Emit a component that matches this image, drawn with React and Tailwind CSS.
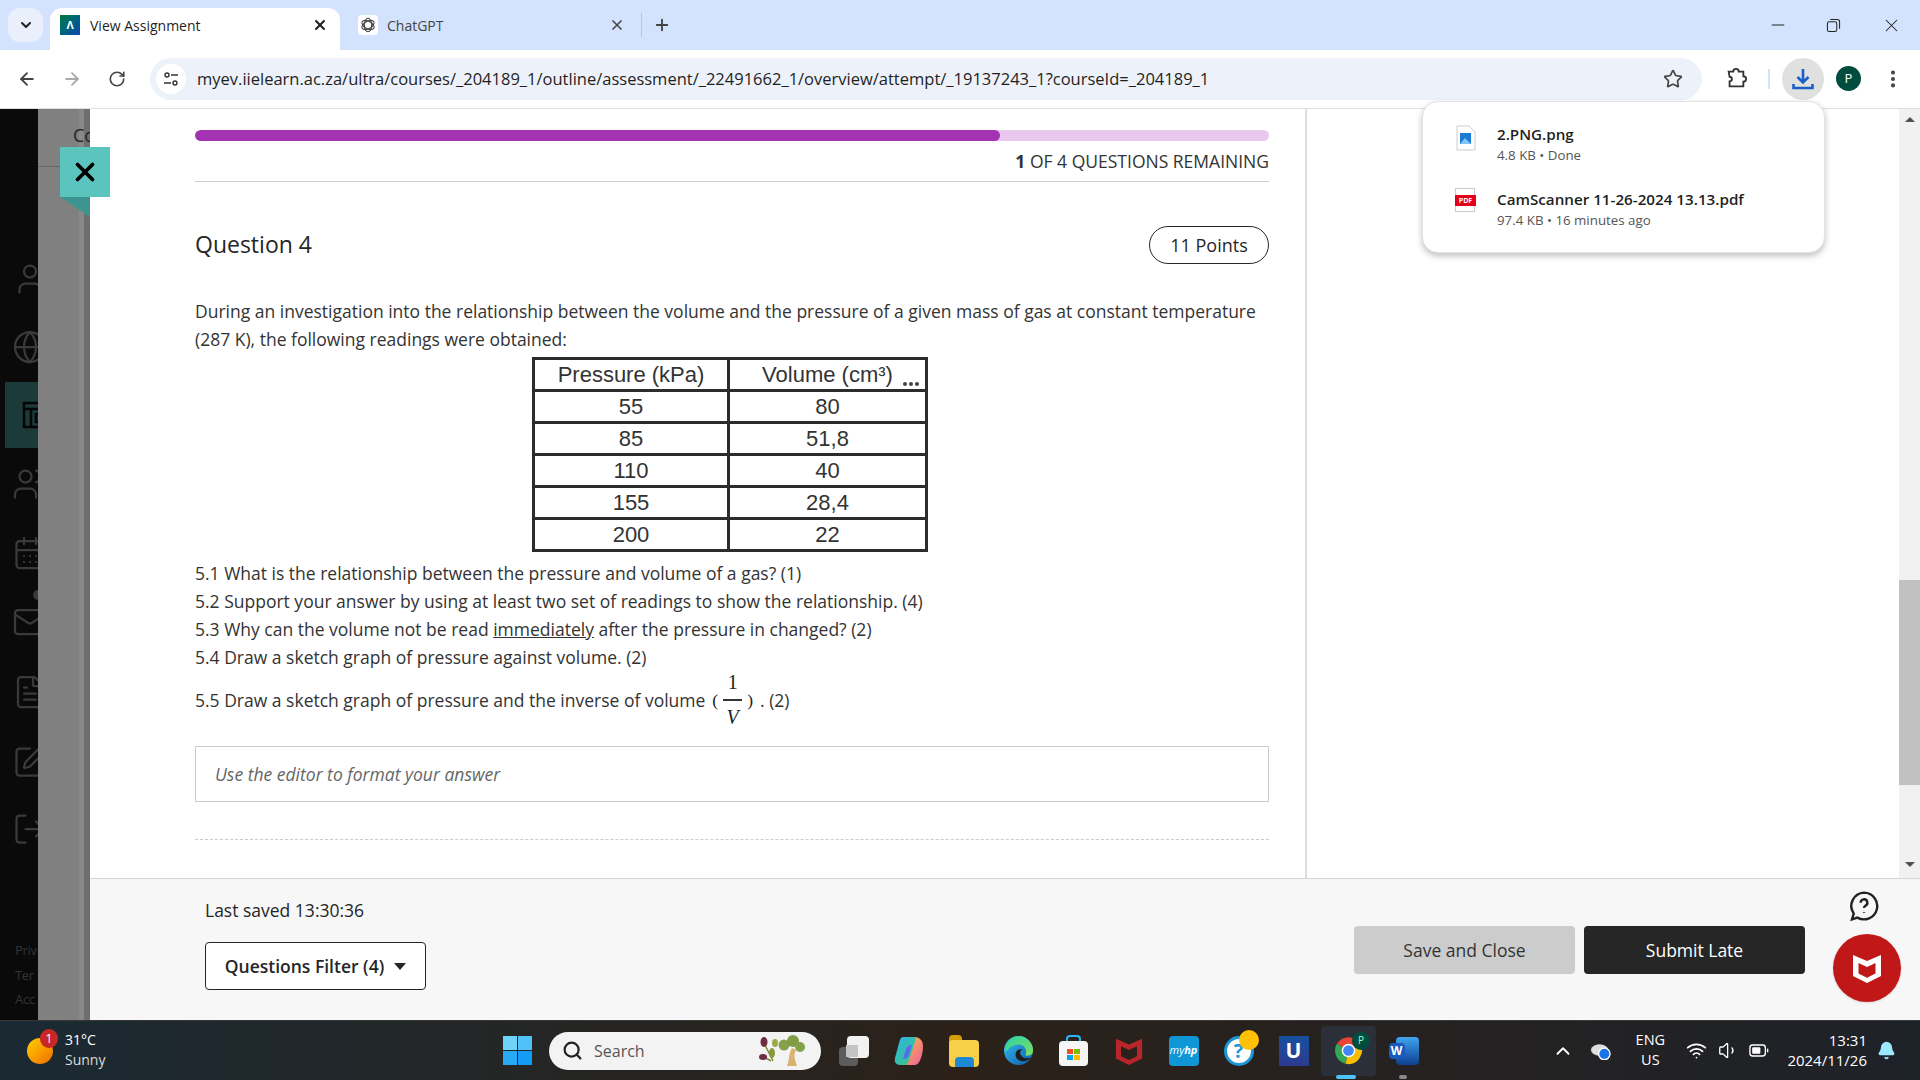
import {
  ArrowLeft, ArrowRight, RotateCw, Star, X, Plus, ChevronDown, ChevronUp, Minus, Search,
  User, Globe, Users, CalendarDays, Mail, FileText, SquarePen, LogOut, EllipsisVertical, Wifi, Volume1, Bell,
} from 'lucide-react';

const sidebarIcons = [
  { Icon: User, row: 'h-[67px] mt-[136px]' },
  { Icon: Globe, row: 'h-[69px]' },
  { Icon: null, row: 'h-[66px] my-[1px]' },
  { Icon: Users, row: 'h-[70px]' },
  { Icon: CalendarDays, row: 'h-[68px]' },
  { Icon: Mail, row: 'h-[70px]' },
  { Icon: FileText, row: 'h-[70px]' },
  { Icon: SquarePen, row: 'h-[70px]' },
  { Icon: LogOut, row: 'h-[64px]' },
];

const tableRows = [
  ['55', '80'],
  ['85', '51,8'],
  ['110', '40'],
  ['155', '28,4'],
  ['200', '22'],
];

const McAfeeShield = ({ className, fill = '#fff' }) => (
  <svg viewBox="0 0 32 32" className={className}>
    <path fill={fill} d="M2 3l14 6 14-6v21l-14 7-14-7zM7.500 11v10.500l8.500 4.200 8.500-4.200V11L16 15z" fillRule="evenodd" />
  </svg>
);

const ChatGptFavicon = () => (
  <span className="w-5 h-5 rounded bg-white flex items-center justify-center">
    <svg viewBox="0 0 24 24" className="w-4 h-4" fill="none" stroke="#444" strokeWidth="1.600">
      <ellipse cx="12" cy="12" rx="5.500" ry="10" />
      <ellipse cx="12" cy="12" rx="5.500" ry="10" transform="rotate(60 12 12)" />
      <ellipse cx="12" cy="12" rx="5.500" ry="10" transform="rotate(120 12 12)" />
    </svg>
  </span>
);

const TabBar = () => (
  <div className="h-[50px] bg-[#d3e3fd] flex items-end relative shrink-0 text-[14px] text-[#1f1f1f]">
    <div className="absolute left-2 top-2 w-[35px] h-[34px] rounded-xl bg-[#e9effb] flex items-center justify-center">
      <ChevronDown size={16} strokeWidth={3} />
    </div>
    <div className="ml-[50px] w-[290px] h-[42px] bg-white rounded-t-xl flex items-center pl-[10px] pr-[12px] pb-[8px]">
      <span className="w-5 h-5 bg-gradient-to-br from-[#0a7a3a] to-[#1a3fb0] text-white text-[11px] font-bold flex items-center justify-center">Λ</span>
      <span className="ml-[10px] flex-1">View Assignment</span>
      <X size={16} strokeWidth={3} />
    </div>
    <div className="w-[301px] h-[42px] flex items-center pl-[18px] pr-[16px] pb-[8px] text-[#444]">
      <ChatGptFavicon />
      <span className="ml-[9px] flex-1">ChatGPT</span>
      <X size={16} strokeWidth={2.500} />
    </div>
    <div className="h-[42px] flex items-center pb-[8px] text-[#444]">
      <span className="w-[1px] h-[24px] bg-[#a8c7fa]" />
      <Plus size={18} strokeWidth={2.500} className="ml-[11px]" />
    </div>
    <div className="ml-auto h-[50px] flex items-center text-[#222]">
      <Minus size={20} strokeWidth={1.200} className="mr-[38px]" />
      <svg viewBox="0 0 16 16" className="w-[15px] h-[15px] mr-[40px]" fill="none" stroke="#222" strokeWidth="1.100">
        <rect x="1.500" y="4" width="10" height="10.500" rx="2" />
        <path d="M4.500 1.500h7.500a2.500 2.500 0 0 1 2.500 2.500v7.500" />
      </svg>
      <X size={21} strokeWidth={1.200} className="mr-[18px]" />
    </div>
  </div>
);

const Toolbar = () => (
  <div className="h-[59px] bg-white border-b border-[#dfdfdf] rounded-t-xl flex items-center shrink-0 pb-[1px] text-[#444]">
    <ArrowLeft size={20} strokeWidth={2.200} className="ml-[17px]" />
    <ArrowRight size={20} strokeWidth={2.200} className="ml-[25px] text-[#aaa]" />
    <RotateCw size={18} strokeWidth={2.200} className="ml-[26px]" />
    <div className="ml-[24px] w-[1552px] h-[42px] rounded-full bg-[#edf2fa] flex items-center pl-[6px]">
      <span className="w-[30px] h-[30px] rounded-full bg-white flex items-center justify-center">
        <svg viewBox="0 0 16 16" className="w-4 h-4" fill="none" stroke="#333" strokeWidth="1.400">
          <circle cx="4" cy="4" r="2" />
          <path d="M8 4h7M1 12h7" />
          <circle cx="12" cy="12" r="2" />
        </svg>
      </span>
      <span className="ml-[11px] pt-[1px] text-[16.500px] text-[#1f1f1f] whitespace-nowrap">myev.iielearn.ac.za/ultra/courses/_204189_1/outline/assessment/_22491662_1/overview/attempt/_19137243_1?courseId=_204189_1</span>
      <Star size={20} strokeWidth={2} className="ml-auto mr-[19px]" />
    </div>
    <svg viewBox="0 0 24 24" className="ml-[23px] w-[22px] h-[22px]" fill="none" stroke="#333" strokeWidth="2">
      <path d="M4 4h5a3 3 0 0 1 6 0h5v5a3 3 0 0 1 0 6v5H5v-5.500a2.500 2.500 0 0 0 0-5z" />
    </svg>
    <span className="ml-[21px] w-[2px] h-[20px] bg-[#d3e3fd]" />
    <span className="ml-[12px] w-[42px] h-[42px] rounded-full bg-[#e0e0e0] flex items-center justify-center">
      <svg viewBox="0 0 24 24" className="w-[24px] h-[24px]" fill="none" stroke="#1a5fc8" strokeWidth="2.600">
        <path d="M12 2v13M6.500 10l5.500 5.500 5.500-5.500M2.500 17v4h19v-4" />
      </svg>
    </span>
    <span className="ml-[12px] w-[25px] h-[25px] rounded-full bg-[#004d40] text-white text-[13px] flex items-center justify-center">P</span>
    <EllipsisVertical size={22} strokeWidth={2.500} className="ml-[21px]" />
  </div>
);

const DownloadsPopup = () => (
  <div className="absolute left-[1422px] top-[101px] w-[403px] h-[152px] bg-white rounded-2xl border border-[#e3e3e3] shadow-[0_3px_6px_rgba(0,0,0,0.25)] pt-[21px] pl-[33px] text-[#1f1f1f]">
    <div className="flex h-[52px]">
      <svg viewBox="0 0 20 26" className="w-[20px] h-[26px] mt-[2px]">
        <path d="M1 1h12l6 6v18H1z" fill="#fff" stroke="#ccc" />
        <rect x="4" y="8" width="11" height="11" fill="#1e7ad6" />
        <path d="M4 19l5-6 6 6z" fill="#7cc7f5" />
      </svg>
      <div className="ml-[21px]">
        <div className="text-[15.200px] leading-[22px] font-semibold">2.PNG.png</div>
        <div className="text-[13.300px] leading-[20px] text-[#555]">4.8 KB • Done</div>
      </div>
    </div>
    <div className="flex h-[52px] mt-[13px]">
      <div className="w-[20px] h-[24px] relative border border-[#ccc] -ml-[1px]">
        <span className="absolute -left-[1px] top-[6px] w-[21px] h-[11px] bg-[#e3001b] text-white text-[7px] font-bold leading-[11px] text-center">PDF</span>
      </div>
      <div className="ml-[22px]">
        <div className="text-[15.200px] leading-[22px] font-semibold">CamScanner 11-26-2024 13.13.pdf</div>
        <div className="text-[13.300px] leading-[20px] text-[#555]">97.4 KB • 16 minutes ago</div>
      </div>
    </div>
  </div>
);

const Sidebar = () => (
  <div className="w-[38px] bg-[#0a0a0a] shrink-0 overflow-hidden relative text-[#3a3a3a]">
    {sidebarIcons.map(({ Icon, row }, i) => (
      <div key={i} className={`${row} flex items-center ${Icon ? 'pl-[12px]' : 'ml-[5px] pl-[17px] bg-[#1c3a3a]'}`}>
        {Icon ? (
          <Icon size={36} strokeWidth={1.500} className="shrink-0" />
        ) : (
          <svg viewBox="0 0 30 30" className="w-[30px] h-[30px] shrink-0" fill="none" stroke="#050505" strokeWidth="2.500">
            <rect x="2" y="3" width="26" height="24" />
            <path d="M2 9h26M9 9v18M14 14h9v8h-9z" />
          </svg>
        )}
      </div>
    ))}
    <span className="absolute left-[33px] top-[481px] w-[10px] h-[10px] rounded-full bg-[#3a3a3a]" />
    <div className="mt-[77px] pl-[15px] text-[13px] tracking-tight leading-[24.500px] text-[#333] whitespace-nowrap font-['Open_Sans',sans-serif]">
      <div>Priv</div>
      <div>Ter</div>
      <div>Acc</div>
    </div>
  </div>
);

const Backdrop = () => (
  <div className="w-[52px] shrink-0 flex relative overflow-hidden">
    <div className="w-[41px] bg-[#808080]">
      <div className="mt-[57px] h-[1px] bg-[#666]" />
    </div>
    <div className="w-[5px] bg-[#888]" />
    <div className="w-[6px] bg-[#6e6e6e]" />
    <span className="absolute left-[35px] top-[14px] text-[18px] leading-[24px] text-[#222] font-['Open_Sans',sans-serif]">Co</span>
  </div>
);

const DataTable = () => (
  <div className="ml-[337px] w-[396px] border-[3px] border-[#2c2c2c] text-[22px] text-[#333] font-['Liberation_Sans',sans-serif] mt-[4px]">
    <div className="grid grid-cols-2 h-[29px] leading-[29px]">
      <div className="text-center border-r-[3px] border-[#2c2c2c]">Pressure (kPa)</div>
      <div className="text-center relative">
        Volume (cm³)
        <span className="absolute right-[6px] bottom-[3px] flex gap-[2px]">
          <i className="w-[4px] h-[4px] rounded-full bg-[#444]" />
          <i className="w-[4px] h-[4px] rounded-full bg-[#444]" />
          <i className="w-[4px] h-[4px] rounded-full bg-[#444]" />
        </span>
      </div>
    </div>
    {tableRows.map(([p, v]) => (
      <div key={p} className="grid grid-cols-2 h-[32px] leading-[29px] border-t-[3px] border-[#2c2c2c]">
        <div className="text-center border-r-[3px] border-[#2c2c2c]">{p}</div>
        <div className="text-center">{v}</div>
      </div>
    ))}
  </div>
);

const Fraction = () => (
  <span className="inline-flex items-center font-['Liberation_Serif',serif] text-[#222] mx-[7px] align-middle">
    <span>(</span>
    <span className="inline-flex flex-col items-center mx-[5px] text-[20px] leading-[33px]">
      <span>1</span>
      <span className="w-[19px] h-[1.500px] bg-[#333]" />
      <span className="italic">V</span>
    </span>
    <span>)</span>
  </span>
);

const QuestionPanel = () => (
  <div className="w-[1217px] h-full border-r-2 border-[#ddd] pl-[105px] pr-[36px] pt-[21px] font-['Open_Sans',sans-serif] text-[#333]">
    <div className="h-[11px] rounded-full bg-[#eac7ee] overflow-hidden">
      <div className="h-full w-[805px] rounded-full bg-[#a333b0]" />
    </div>
    <div className="mt-[8px] text-right text-[17.500px] leading-[24px]">
      <span className="font-bold">1</span> OF 4 QUESTIONS REMAINING
    </div>
    <div className="mt-[8px] h-[1px] bg-[#cdcdcd]" />
    <div className="mt-[44px] h-[38px] flex items-center justify-between">
      <h2 className="text-[23px] text-[#262626] pb-[2px]">Question 4</h2>
      <span className="w-[120px] h-[38px] rounded-full border border-[#262626] flex items-center justify-center text-[18px] text-[#262626]">11 Points</span>
    </div>
    <p className="mt-[33px] text-[17.500px] leading-[28px]">
      During an investigation into the relationship between the volume and the pressure of a given mass of gas at constant temperature (287 K), the following readings were obtained:
    </p>
    <DataTable />
    <div className="mt-[7px] text-[17.500px] leading-[28px]">
      <div>5.1 What is the relationship between the pressure and volume of a gas? (1)</div>
      <div>5.2 Support your answer by using at least two set of readings to show the relationship. (4)</div>
      <div>5.3 Why can the volume not be read <span className="underline">immediately</span> after the pressure in changed? (2)</div>
      <div>5.4 Draw a sketch graph of pressure against volume. (2)</div>
      <div className="flex items-center h-[58px]">
        5.5 Draw a sketch graph of pressure and the inverse of volume<Fraction />. (2)
      </div>
    </div>
    <div className="mt-[17px] h-[56px] border border-[#ccc] flex items-center pl-[19px] text-[17.500px] italic text-[#666]">
      Use the editor to format your answer
    </div>
    <div className="mt-[37px] border-t border-dashed border-[#ccc]" />
  </div>
);

const Scrollbar = () => (
  <div className="w-[21px] bg-[#f1f1f1] flex flex-col items-center shrink-0">
    <span className="mt-[8px] w-0 h-0 border-x-[5px] border-x-transparent border-b-[5px] border-b-[#505050]" />
    <div className="mt-[458px] w-full h-[205px] bg-[#c1c1c1]" />
    <span className="mt-[77px] w-0 h-0 border-x-[5px] border-x-transparent border-t-[5px] border-t-[#505050]" />
  </div>
);

const Footer = () => (
  <div className="h-[142px] bg-[#f7f7f7] border-t border-[#d5d5d5] flex justify-between pl-[115px] pr-[115px] font-['Open_Sans',sans-serif] shrink-0">
    <div>
      <div className="mt-[19px] text-[17.500px] leading-[24px] text-[#262626]">Last saved 13:30:36</div>
      <button className="mt-[20px] w-[221px] h-[48px] bg-white border border-[#262626] rounded-sm flex items-center justify-center text-[17.500px] font-semibold text-[#262626]">
        Questions Filter (4)
        <span className="ml-[10px] w-0 h-0 border-x-[6px] border-x-transparent border-t-[7px] border-t-[#262626]" />
      </button>
    </div>
    <div className="flex gap-[9px] mt-[47px]">
      <button className="w-[221px] h-[48px] bg-[#cccccc] rounded-sm text-[17.500px] text-[#333]">Save and Close</button>
      <button className="w-[221px] h-[48px] bg-[#262626] rounded-sm text-[17.500px] font-medium text-white">Submit Late</button>
    </div>
  </div>
);

const StartLogo = () => (
  <div className="w-[29px] h-[29px] grid grid-cols-2 gap-[1px]">
    <span className="bg-[#6fd3f7]" />
    <span className="bg-[#4fc3f7]" />
    <span className="bg-[#2aa9f3]" />
    <span className="bg-[#149bf5]" />
  </div>
);

const TaskCell = ({ children, className = '' }) => (
  <div className={`w-[55px] h-[50px] flex items-center justify-center relative shrink-0 ${className}`}>{children}</div>
);

const ChromeLogo = () => (
  <svg viewBox="0 0 32 32" className="w-[31px] h-[31px]">
    <path d="M16 16L4 9A14 14 0 0 1 28 9z" fill="#ea4335" />
    <path d="M16 16L4 9A14 14 0 0 0 13 29.700z" fill="#34a853" />
    <path d="M16 16L28 9A14 14 0 0 1 13 29.700z" fill="#fbbc04" />
    <circle cx="16" cy="16" r="7" fill="#fff" />
    <circle cx="16" cy="16" r="5.500" fill="#4285f4" />
  </svg>
);

const TaskbarIcons = () => (
  <div className="flex items-center ml-[5px]">
    <TaskCell>
      <span className="relative w-[30px] h-[30px] block">
        <span className="absolute left-0 bottom-0 w-[19px] h-[19px] rounded-sm bg-[#5c5c5c]" />
        <span className="absolute right-0 top-0 w-[22px] h-[22px] rounded-sm bg-[#f2f2f2]" />
        <span className="absolute left-[7px] top-[9px] w-[12px] h-[12px] bg-[#c4c4c4]" />
      </span>
    </TaskCell>
    <TaskCell>
      <svg viewBox="0 0 30 32" className="w-[30px] h-[32px]">
        <defs>
          <linearGradient id="copA" x1="0" y1="0" x2="1" y2="1"><stop offset="0" stopColor="#2bb5ee" /><stop offset="1" stopColor="#3fc56f" /></linearGradient>
          <linearGradient id="copB" x1="0" y1="0" x2="1" y2="1"><stop offset="0" stopColor="#f7c33a" /><stop offset="1" stopColor="#ef5aa0" /></linearGradient>
          <linearGradient id="copC" x1="0" y1="0" x2="1" y2="1"><stop offset="0" stopColor="#7a5cf0" /><stop offset="1" stopColor="#2f7df0" /></linearGradient>
        </defs>
        <path d="M9 2h12c3 0 2 3 1 5l-6 18c-1 3-2 5-6 5H6c-4 0-6-3-5-7l4-15c1-4 2-6 4-6z" fill="url(#copA)" />
        <path d="M21 30H10c3 0 4-2 5-5l6-18c1-3 1-5-1-5 5 0 9 3 9 9 0 8-3 19-8 19z" fill="url(#copB)" />
        <path d="M12 14c1-3 3-4 6-4l-3 10c-1 3-3 4-6 4z" fill="url(#copC)" />
      </svg>
    </TaskCell>
    <TaskCell>
      <span className="relative w-[30px] h-[32px] block">
        <span className="absolute left-0 top-0 w-[13px] h-[8px] rounded-t-sm bg-[#d99c0b]" />
        <span className="absolute left-0 top-[5px] right-0 bottom-0 rounded-sm bg-[#f8cf48]" />
        <span className="absolute left-[6px] bottom-0 w-[19px] h-[10px] rounded-t-sm bg-[#1e88d2]" />
      </span>
    </TaskCell>
    <TaskCell>
      <svg viewBox="0 0 32 32" className="w-[31px] h-[31px]">
        <defs>
          <linearGradient id="edgeA" x1="0" y1="0" x2="1" y2="1"><stop offset="0" stopColor="#35c1f1" /><stop offset="1" stopColor="#0f58a8" /></linearGradient>
          <linearGradient id="edgeB" x1="0" y1="0" x2="1" y2="1"><stop offset="0" stopColor="#2ad1a8" /><stop offset="1" stopColor="#7de05b" /></linearGradient>
        </defs>
        <circle cx="16" cy="16" r="15" fill="url(#edgeA)" />
        <path d="M16 1a15 15 0 0 1 15 15c0 5-5 6-8 5 3-6-2-12-8-11-6 0-9 4-13 8 0-9 6-17 14-17z" fill="url(#edgeB)" />
        <path d="M25 26c-7 3-12-1-12-6 0-4 4-6 7-5-2 1-3 3-2 5 2 4 7 5 12 3-1 1-3 2-5 3z" fill="#1c1c1c" />
      </svg>
    </TaskCell>
    <TaskCell>
      <span className="relative w-[29px] h-[31px] block">
        <span className="absolute left-[7px] top-0 w-[15px] h-[9px] border-2 border-b-0 border-[#29b6f6] rounded-t" />
        <span className="absolute left-0 top-[6px] right-0 bottom-0 rounded bg-[#f5f5f5] grid grid-cols-2 gap-[1px] p-[8px] pb-[6px]">
          <i className="bg-[#f25022]" />
          <i className="bg-[#7fba00]" />
          <i className="bg-[#00a4ef]" />
          <i className="bg-[#ffb900]" />
        </span>
      </span>
    </TaskCell>
    <TaskCell>
      <McAfeeShield className="w-[30px] h-[32px]" fill="#b8252a" />
    </TaskCell>
    <TaskCell>
      <span className="w-[30px] h-[30px] rounded-sm bg-[#0f96d6] flex items-center justify-center text-white text-[11px] italic">my<b>hp</b></span>
    </TaskCell>
    <TaskCell>
      <span className="w-[30px] h-[30px] rounded-full bg-white border-[3px] border-[#1c97d6] text-[#1c97d6] flex items-center justify-center text-[20px] font-bold">?</span>
      <span className="absolute left-[28px] top-[4px] w-[20px] h-[20px] rounded-full bg-[#ffc107]" />
    </TaskCell>
    <TaskCell>
      <span className="w-[30px] h-[30px] bg-gradient-to-b from-[#13509e] to-[#2b3a8f] flex items-center justify-center text-white text-[21px] font-bold">U</span>
    </TaskCell>
    <TaskCell className="rounded bg-[#2b3038]">
      <ChromeLogo />
      <span className="absolute left-[31px] top-[6px] w-[18px] h-[18px] rounded-full bg-[#004d40] text-[#9fc] text-[10px] flex items-center justify-center">P</span>
      <span className="absolute left-[15px] bottom-[-3px] w-[20px] h-[4px] rounded-full bg-[#4fc3f7]" />
    </TaskCell>
    <TaskCell>
      <span className="relative w-[30px] h-[28px] block">
        <span className="absolute right-0 top-0 w-[23px] h-[28px] rounded-sm bg-gradient-to-b from-[#41a5ee] to-[#103f91]" />
        <span className="absolute left-0 top-[6px] w-[16px] h-[16px] rounded-sm bg-[#185abd] text-white text-[12px] font-bold leading-[16px] text-center">W</span>
      </span>
      <span className="absolute left-[23px] bottom-[-3px] w-[8px] h-[4px] rounded-full bg-[#888]" />
    </TaskCell>
  </div>
);

const Taskbar = () => (
  <div className="h-[60px] shrink-0 relative border-t border-[#3a3a3a] flex items-center bg-gradient-to-r from-[#1a2a33] via-[#2b2119] to-[#1e2229] text-white font-['Open_Sans',sans-serif]">
    <div className="w-[503px] flex items-center shrink-0 pl-[27px]">
      <span className="relative w-[26px] h-[26px] rounded-full bg-gradient-to-br from-[#ffd000] to-[#ec6a00]">
        <span className="absolute left-[13px] -top-[9px] w-[18px] h-[19px] rounded-full bg-[#c62828] text-[12px] text-center leading-[19px]">1</span>
      </span>
      <div className="ml-[12px] text-[14px] leading-[20px] -mt-[2px]">
        <div>31°C</div>
        <div className="text-[#ddd]">Sunny</div>
      </div>
    </div>
    <StartLogo />
    <div className="ml-[17px] w-[272px] h-[38px] rounded-full bg-[#f3f3f3] flex items-center pl-[13px] text-[#555] text-[16px]">
      <Search size={21} strokeWidth={2.500} className="text-[#222]" />
      <span className="ml-[11px]">Search</span>
      <svg viewBox="0 0 48 32" className="ml-auto mr-[16px] w-[48px] h-[32px]">
        <path d="M6 6l10 20M4 20l10 6" stroke="#7a8a3a" strokeWidth="1.500" fill="none" />
        <ellipse cx="7" cy="7" rx="3.500" ry="5" fill="#6d2c3f" />
        <ellipse cx="15" cy="18" rx="3" ry="5" fill="#8a9a3a" />
        <ellipse cx="6" cy="22" rx="4" ry="3" fill="#6d2c3f" />
        <ellipse cx="18" cy="8" rx="3" ry="4" fill="#9aaa4a" />
        <path d="M30 31c3-8 1-11 5-18l4 2c-3 5-1 10 1 16z" fill="#d8b26e" />
        <circle cx="27" cy="10" r="5.500" fill="#85a24a" />
        <circle cx="36" cy="6" r="6" fill="#7e9d45" />
        <circle cx="43" cy="12" r="5" fill="#85a24a" />
      </svg>
    </div>
    <TaskbarIcons />
    <div className="ml-auto flex items-center text-[14px] pr-[24px] shrink-0">
      <ChevronUp size={22} strokeWidth={2} />
      <svg viewBox="0 0 22 18" className="ml-[16px] w-[21px] h-[18px]">
        <ellipse cx="10" cy="8" rx="9" ry="6" fill="#ddd" />
        <circle cx="15" cy="12" r="6" fill="#1a73e8" stroke="#fff" strokeWidth="1.500" />
      </svg>
      <div className="ml-[17px] w-[44px] text-center leading-[20px] text-[14.500px] -mt-[2px]">
        <div>ENG</div>
        <div>US</div>
      </div>
      <Wifi size={21} strokeWidth={2} className="ml-[14px]" />
      <Volume1 size={21} strokeWidth={1.500} className="ml-[11px]" />
      <svg viewBox="0 0 22 14" className="ml-[10px] w-[20px] h-[13px]" fill="none" stroke="#fff" strokeWidth="1.500">
        <rect x="1" y="1" width="17" height="12" rx="3" />
        <rect x="3.500" y="3.500" width="9" height="7" rx="1" fill="#fff" stroke="none" />
        <path d="M20.500 5v4" />
      </svg>
      <div className="ml-[18px] text-right leading-[20px] text-[15px] -mt-[2px]">
        <div>13:31</div>
        <div>2024/11/26</div>
      </div>
      <Bell size={19} fill="#9be8ff" stroke="#9be8ff" className="ml-[10px]" />
    </div>
  </div>
);

export default function App() {
  return (
    <div className="w-[1920px] h-[1080px] relative flex flex-col overflow-hidden bg-white font-['Open_Sans',sans-serif]">
      <TabBar />
      <Toolbar />
      <div className="flex-1 flex min-h-0">
        <Sidebar />
        <Backdrop />
        <div className="flex-1 flex flex-col min-w-0">
          <div className="flex-1 flex justify-between min-h-0">
            <QuestionPanel />
            <Scrollbar />
          </div>
          <Footer />
        </div>
      </div>
      <Taskbar />

      <DownloadsPopup />

      <div className="absolute left-[60px] top-[147px] w-[50px] h-[50px] bg-[#5bc5bd] flex items-center justify-center">
        <X size={30} strokeWidth={3} className="text-black" />
      </div>
      <div className="absolute left-[60px] top-[197px] w-[30px] h-[20px] bg-[#3d9490] [clip-path:polygon(0_0,100%_0,100%_100%)]" />

      <svg viewBox="0 0 24 24" className="absolute left-[1848px] top-[890px] w-[32px] h-[32px]" fill="none" stroke="#222" strokeWidth="1.800">
        <path d="M12 2a10 10 0 1 1-5 18.700L3 22l1.300-4.300A10 10 0 0 1 12 2z" />
        <path d="M9.500 9.500a2.500 2.500 0 1 1 3.500 2.300c-.7.400-1 .8-1 1.700M12 16.500v.5" />
      </svg>
      <div className="absolute left-[1833px] top-[934px] w-[68px] h-[68px] rounded-full bg-[#c01818] shadow flex items-center justify-center">
        <McAfeeShield className="w-[32px] h-[36px]" />
      </div>
    </div>
  );
}
